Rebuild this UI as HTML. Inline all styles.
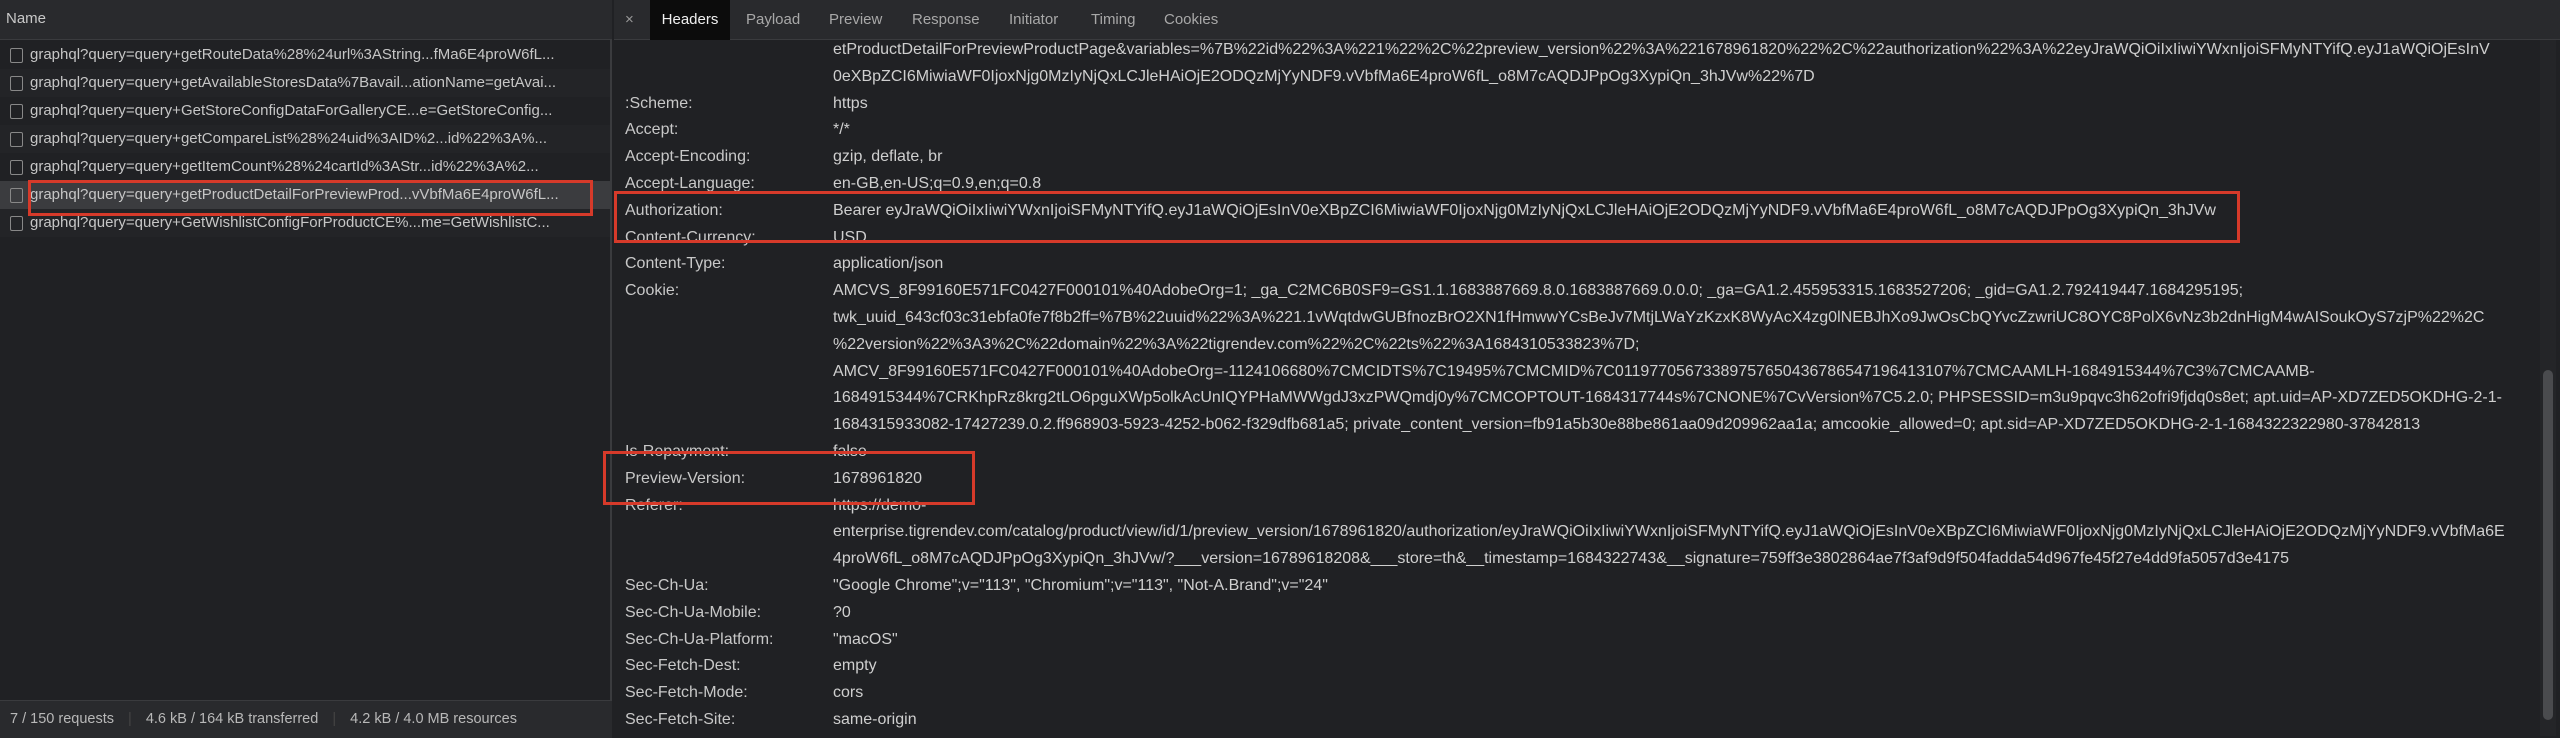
<!DOCTYPE html>
<html><head><meta charset="utf-8"><style>
*{margin:0;padding:0;box-sizing:border-box}
body{width:2560px;height:738px;background:#202124;font-family:"Liberation Sans",Arial,sans-serif;color:#c8c8c8;font-size:15px;position:relative;overflow:hidden}
.abs{position:absolute;white-space:nowrap}
#left{left:0;top:0;width:612px;height:738px;background:#202124;border-right:2px solid #3a3b3e}
#lhead{left:0;top:0;width:612px;height:40px;background:#292a2d;border-bottom:1px solid #3a3b3e}
.row{left:0;width:610px;height:28px;line-height:28px;padding-left:30px;color:#c6c6c6;overflow:hidden}
.row:before{content:"";position:absolute;left:10px;top:7px;width:11px;height:13px;border:1.5px solid #888;border-radius:2px}
#status{left:0;top:700px;width:612px;height:38px;background:#292a2d;border-top:1px solid #3a3b3e;line-height:36px;color:#b8b8b8;padding-left:10px;font-size:14.5px}
#rhead{left:614px;top:0;width:1946px;height:40px;background:#292a2d;border-bottom:1px solid #3a3b3e}
.tab{top:0;height:40px;line-height:40px;color:#a8a8a8;font-size:15px}
.lab{left:625px;color:#c8c8c8;font-size:16px}
.val{left:833px;color:#cfcfcf;width:1700px;overflow:hidden;font-size:16px}
.red{border:3px solid #d63a2a}
</style></head><body>
<div class="abs" id="left"></div>
<div class="abs" id="lhead"><span style="position:absolute;left:6px;top:10px;color:#c8c8c8">Name</span></div>
<div class="abs row" style="top:41px">graphql?query=query+getRouteData%28%24url%3AString...fMa6E4proW6fL...</div>
<div class="abs row" style="top:69px;background:#232427">graphql?query=query+getAvailableStoresData%7Bavail...ationName=getAvai...</div>
<div class="abs row" style="top:97px">graphql?query=query+GetStoreConfigDataForGalleryCE...e=GetStoreConfig...</div>
<div class="abs row" style="top:125px;background:#232427">graphql?query=query+getCompareList%28%24uid%3AID%2...id%22%3A%...</div>
<div class="abs row" style="top:153px">graphql?query=query+getItemCount%28%24cartId%3AStr...id%22%3A%2...</div>
<div class="abs row" style="top:181px;background:#3b3c3f">graphql?query=query+getProductDetailForPreviewProd...vVbfMa6E4proW6fL...</div>
<div class="abs row" style="top:209px;background:#232427">graphql?query=query+GetWishlistConfigForProductCE%...me=GetWishlistC...</div>
<div class="abs red" style="left:28px;top:180px;width:565px;height:36px"></div>
<div class="abs" id="status">7 / 150 requests <span style="color:#444;margin:0 10px">|</span> 4.6 kB / 164 kB transferred <span style="color:#444;margin:0 10px">|</span> 4.2 kB / 4.0 MB resources</div>
<div class="abs" id="rhead"></div>
<div class="abs tab" style="left:625px;color:#999">×</div>
<div class="abs tab" style="left:650px;width:80px;background:#0c0c0c;color:#f0f0f0;text-align:center">Headers</div>
<div class="abs tab" style="left:746px">Payload</div>
<div class="abs tab" style="left:829px">Preview</div>
<div class="abs tab" style="left:912px">Response</div>
<div class="abs tab" style="left:1009px">Initiator</div>
<div class="abs tab" style="left:1091px">Timing</div>
<div class="abs tab" style="left:1164px">Cookies</div>
<div class="abs" style="left:2540px;top:40px;width:16px;height:696px;background:#242528"></div>
<div class="abs" style="left:2543px;top:370px;width:10px;height:350px;background:#4a4b4e;border-radius:5px"></div>
<div style="position:absolute;left:0;top:37px;line-height:26.8px">
<div class="abs val" style="top:0">etProductDetailForPreviewProductPage&amp;variables=%7B%22id%22%3A%221%22%2C%22preview_version%22%3A%221678961820%22%2C%22authorization%22%3A%22eyJraWQiOiIxIiwiYWxnIjoiSFMyNTYifQ.eyJ1aWQiOjEsInV</div>
<div class="abs val" style="top:26.8px">0eXBpZCI6MiwiaWF0IjoxNjg0MzIyNjQxLCJleHAiOjE2ODQzMjYyNDF9.vVbfMa6E4proW6fL_o8M7cAQDJPpOg3XypiQn_3hJVw%22%7D</div>
<div class="abs lab" style="top:53.6px">:Scheme:</div><div class="abs val" style="top:53.6px">https</div>
<div class="abs lab" style="top:80.4px">Accept:</div><div class="abs val" style="top:80.4px">*/*</div>
<div class="abs lab" style="top:107.2px">Accept-Encoding:</div><div class="abs val" style="top:107.2px">gzip, deflate, br</div>
<div class="abs lab" style="top:134px">Accept-Language:</div><div class="abs val" style="top:134px">en-GB,en-US;q=0.9,en;q=0.8</div>
<div class="abs lab" style="top:160.8px">Authorization:</div><div class="abs val" style="top:160.8px">Bearer eyJraWQiOiIxIiwiYWxnIjoiSFMyNTYifQ.eyJ1aWQiOjEsInV0eXBpZCI6MiwiaWF0IjoxNjg0MzIyNjQxLCJleHAiOjE2ODQzMjYyNDF9.vVbfMa6E4proW6fL_o8M7cAQDJPpOg3XypiQn_3hJVw</div>
<div class="abs lab" style="top:187.6px">Content-Currency:</div><div class="abs val" style="top:187.6px">USD</div>
<div class="abs lab" style="top:214.4px">Content-Type:</div><div class="abs val" style="top:214.4px">application/json</div>
<div class="abs lab" style="top:241.2px">Cookie:</div><div class="abs val" style="top:241.2px">AMCVS_8F99160E571FC0427F000101%40AdobeOrg=1; _ga_C2MC6B0SF9=GS1.1.1683887669.8.0.1683887669.0.0.0; _ga=GA1.2.455953315.1683527206; _gid=GA1.2.792419447.1684295195;</div>
<div class="abs val" style="top:268px">twk_uuid_643cf03c31ebfa0fe7f8b2ff=%7B%22uuid%22%3A%221.1vWqtdwGUBfnozBrO2XN1fHmwwYCsBeJv7MtjLWaYzKzxK8WyAcX4zg0lNEBJhXo9JwOsCbQYvcZzwriUC8OYC8PolX6vNz3b2dnHigM4wAISoukOyS7zjP%22%2C</div>
<div class="abs val" style="top:294.8px">%22version%22%3A3%2C%22domain%22%3A%22tigrendev.com%22%2C%22ts%22%3A1684310533823%7D;</div>
<div class="abs val" style="top:321.6px">AMCV_8F99160E571FC0427F000101%40AdobeOrg=-1124106680%7CMCIDTS%7C19495%7CMCMID%7C01197705673389757650436786547196413107%7CMCAAMLH-1684915344%7C3%7CMCAAMB-</div>
<div class="abs val" style="top:348.4px">1684915344%7CRKhpRz8krg2tLO6pguXWp5olkAcUnIQYPHaMWWgdJ3xzPWQmdj0y%7CMCOPTOUT-1684317744s%7CNONE%7CvVersion%7C5.2.0; PHPSESSID=m3u9pqvc3h62ofri9fjdq0s8et; apt.uid=AP-XD7ZED5OKDHG-2-1-</div>
<div class="abs val" style="top:375.2px">1684315933082-17427239.0.2.ff968903-5923-4252-b062-f329dfb681a5; private_content_version=fb91a5b30e88be861aa09d209962aa1a; amcookie_allowed=0; apt.sid=AP-XD7ZED5OKDHG-2-1-1684322322980-37842813</div>
<div class="abs lab" style="top:402px">Is-Repayment:</div><div class="abs val" style="top:402px">false</div>
<div class="abs lab" style="top:428.8px">Preview-Version:</div><div class="abs val" style="top:428.8px">1678961820</div>
<div class="abs lab" style="top:455.6px">Referer:</div><div class="abs val" style="top:455.6px">https://demo-</div>
<div class="abs val" style="top:482.4px">enterprise.tigrendev.com/catalog/product/view/id/1/preview_version/1678961820/authorization/eyJraWQiOiIxIiwiYWxnIjoiSFMyNTYifQ.eyJ1aWQiOjEsInV0eXBpZCI6MiwiaWF0IjoxNjg0MzIyNjQxLCJleHAiOjE2ODQzMjYyNDF9.vVbfMa6E</div>
<div class="abs val" style="top:509.2px">4proW6fL_o8M7cAQDJPpOg3XypiQn_3hJVw/?___version=16789618208&amp;___store=th&amp;__timestamp=1684322743&amp;__signature=759ff3e3802864ae7f3af9d9f504fadda54d967fe45f27e4dd9fa5057d3e4175</div>
<div class="abs lab" style="top:536px">Sec-Ch-Ua:</div><div class="abs val" style="top:536px">"Google Chrome";v="113", "Chromium";v="113", "Not-A.Brand";v="24"</div>
<div class="abs lab" style="top:562.8px">Sec-Ch-Ua-Mobile:</div><div class="abs val" style="top:562.8px">?0</div>
<div class="abs lab" style="top:589.6px">Sec-Ch-Ua-Platform:</div><div class="abs val" style="top:589.6px">"macOS"</div>
<div class="abs lab" style="top:616.4px">Sec-Fetch-Dest:</div><div class="abs val" style="top:616.4px">empty</div>
<div class="abs lab" style="top:643.2px">Sec-Fetch-Mode:</div><div class="abs val" style="top:643.2px">cors</div>
<div class="abs lab" style="top:670px">Sec-Fetch-Site:</div><div class="abs val" style="top:670px">same-origin</div>
</div>
<div class="abs red" style="left:614px;top:191px;width:1626px;height:52px"></div>
<div class="abs red" style="left:603px;top:451px;width:372px;height:54px"></div>
</body></html>
